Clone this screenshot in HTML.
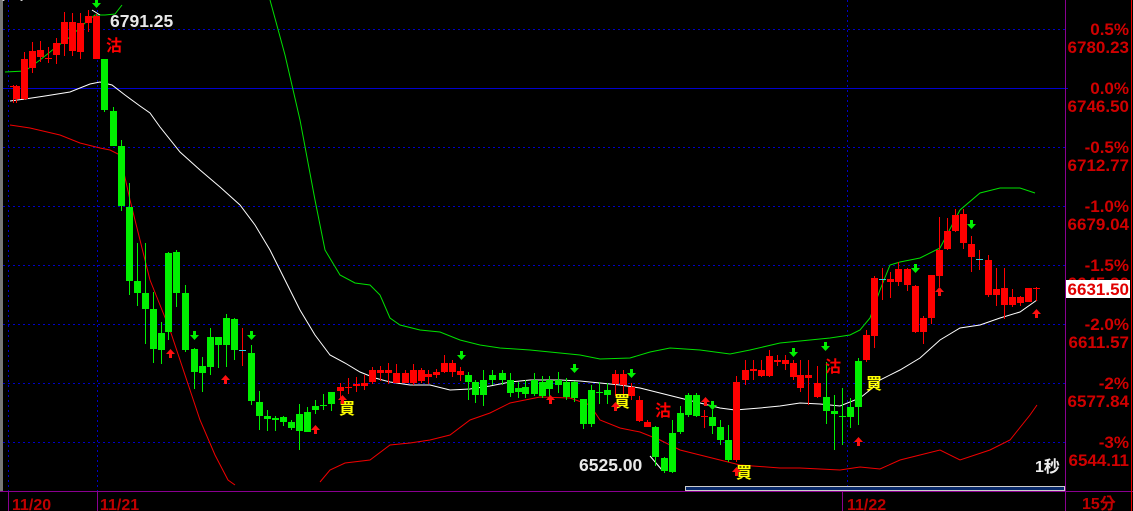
<!DOCTYPE html>
<html><head><meta charset="utf-8"><style>
body{margin:0;background:#000;width:1133px;height:511px;overflow:hidden}
svg{display:block}
text{font-family:"Liberation Sans","Noto Sans CJK TC",sans-serif;font-weight:bold}
</style></head><body>
<svg id="s" width="1133" height="511" xmlns="http://www.w3.org/2000/svg">
<rect width="1133" height="511" fill="#000"/>
<rect x="0" y="0" width="3" height="491" fill="#777"/>
<g stroke="#0000c8" stroke-width="1" stroke-dasharray="2,3">
<line x1="3" y1="29.5" x2="1068" y2="29.5"/>
<line x1="3" y1="147.5" x2="1068" y2="147.5"/>
<line x1="3" y1="206.5" x2="1068" y2="206.5"/>
<line x1="3" y1="265.5" x2="1068" y2="265.5"/>
<line x1="3" y1="324.5" x2="1068" y2="324.5"/>
<line x1="3" y1="383.5" x2="1068" y2="383.5"/>
<line x1="3" y1="442.5" x2="1068" y2="442.5"/>
<line x1="8.5" y1="0" x2="8.5" y2="491"/>
<line x1="97.5" y1="0" x2="97.5" y2="491"/>
<line x1="847.5" y1="0" x2="847.5" y2="491"/>
</g>
<line x1="3" y1="88.5" x2="1068" y2="88.5" stroke="#0000d0"/>
<g id="lines" fill="none" stroke-width="1">
<polyline stroke="#fff" points="10,101 25,99 45,96 70,92 90,84 100,82 112,85 125,95 140,106 150,113 160,127 180,152 200,170 220,187 240,205 255,225 270,250 285,280 300,310 315,335 330,355 345,363 360,372 375,378 390,382 410,385 430,385 450,390 470,389 490,386 510,382 530,380 560,380 580,381 600,383 620,385 640,388 660,393 680,398 700,403 720,408 735,410 760,408 780,406 800,403 820,404 840,406 860,398 870,390 880,380 900,370 920,358 940,340 960,328 980,325 1000,318 1020,312 1037,300"/>
<polyline stroke="#00e000" points="5,72 25,71 40,60 55,48 70,37 85,23 95,15 105,15 115,14 122,5"/>
<polyline stroke="#00e000" points="270,0 285,55 300,120 315,200 325,250 340,275 355,283 370,285 380,295 390,318 400,325 420,330 440,332 460,340 480,345 500,348 530,350 560,353 580,355 600,359 630,358 650,352 670,348 700,350 730,354 750,350 780,343 800,341 830,338 850,335 860,330 870,318 880,290 890,265 900,262 920,258 940,248 960,210 980,193 1000,188 1020,188 1035,193"/>
<polyline stroke="#f00000" points="10,125 30,128 60,135 80,143 100,148 110,150 120,155 130,200 140,240 150,280 160,305 170,330 180,360 190,390 200,420 215,455 228,480 235,485"/>
<polyline stroke="#f00000" points="320,482 330,470 345,463 370,460 390,445 410,443 430,440 450,435 470,420 490,413 510,403 540,397 570,398 590,405 600,420 620,428 640,432 660,440 680,450 700,455 720,460 740,465 780,468 800,468 840,470 860,467 880,469 900,460 920,455 940,450 960,460 990,450 1010,440 1030,415 1037,405"/>
<polyline stroke="#fff" points="92,10 100,15"/>
<polyline stroke="#fff" points="650,456 662,470"/>
</g>
<g id="c"></g>
<text x="110" y="27" fill="#e8e8e8" font-size="17.5">6791.25</text>
<text x="579" y="471" fill="#e8e8e8" font-size="17.5">6525.00</text>
<text x="0" y="-2" fill="#ccc" font-size="14">( 1 )</text>
<g font-size="16" fill="#f00">
<text x="106" y="51">沽</text><text x="655" y="416">沽</text><text x="825" y="372">沽</text>
</g>
<g font-size="16" fill="#ff0">
<text x="339" y="414">買</text><text x="614" y="407">買</text><text x="736" y="478">買</text><text x="866" y="389">買</text>
</g>
<g id="ar"></g>
<rect x="685.5" y="486.5" width="379" height="4" fill="#0a2a6a" stroke="#ccc"/>
<text x="1035" y="472" fill="#eee" font-size="16">1秒</text>
<line x1="0" y1="491.5" x2="1133" y2="491.5" stroke="#8a0090"/>
<line x1="1065.5" y1="0" x2="1065.5" y2="511" stroke="#8a0090"/>
<g stroke="#8a0090"><line x1="8.5" y1="491" x2="8.5" y2="511"/><line x1="97.5" y1="491" x2="97.5" y2="511"/><line x1="842.5" y1="491" x2="842.5" y2="511"/></g>
<line x1="1131.5" y1="0" x2="1131.5" y2="511" stroke="#e00"/>
<g font-size="16" fill="#c00000">
<text x="12" y="510">11/20</text><text x="100" y="510">11/21</text><text x="847" y="510">11/22</text>
<text x="1082" y="509">15分</text>
</g>
<g font-size="17" fill="#d00000" text-anchor="end">
<text x="1129" y="35">0.5%</text><text x="1129" y="53">6780.23</text>
<text x="1129" y="94">0.0%</text><text x="1129" y="112">6746.50</text>
<text x="1129" y="153">-0.5%</text><text x="1129" y="171">6712.77</text>
<text x="1129" y="212">-1.0%</text><text x="1129" y="230">6679.04</text>
<text x="1129" y="271">-1.5%</text><text x="1129" y="289">6645.30</text>
<text x="1129" y="330">-2.0%</text><text x="1129" y="348">6611.57</text>
<text x="1129" y="389">-2%</text><text x="1129" y="407">6577.84</text>
<text x="1129" y="448">-3%</text><text x="1129" y="466">6544.11</text>
</g>
<rect x="1066" y="280" width="64" height="18" fill="#fff"/>
<text x="1129" y="295" font-size="17" fill="#e00000" text-anchor="end">6631.50</text>
</svg>
<script>
var d=[
[13,86,87,85,103,'r'],[16,86,99,85,103,'r'],[24,59,99,52,100,'r'],[32,51,68,42,73,'r'],[40,50,57,41,62,'r'],[48,58,59,47,63,'r'],[56,43,55,38,64,'r'],[64,22,44,12,56,'r'],[72,22,51,13,56,'r'],[80,23,52,13,59,'r'],[88,16,23,10,32,'r'],[96,16,59,14,59,'r'],
[104,59,110,59,112,'g'],[113,111,146,107,146,'g'],[121,146,206,140,211,'g'],[129,207,281,183,295,'g'],[137,281,293,243,306,'g'],[145,293,309,243,344,'g'],[153,309,349,292,363,'g'],[161,333,350,322,364,'g'],[168,253,332,252,340,'g'],[176,252,293,250,307,'g'],[185,293,350,285,352,'g'],[194,349,372,348,389,'g'],[202,366,373,357,392,'g'],[210,337,367,328,375,'g'],[218,337,345,337,368,'g'],[226,318,345,314,367,'g'],[234,319,350,318,360,'g'],[242,350,351,328,366,'c'],[251,353,401,345,405,'g'],[259,402,416,391,430,'g'],[267,416,419,410,431,'g'],[275,418,420,416,431,'g'],[283,417,422,416,426,'g'],[291,422,428,420,430,'g'],[299,414,431,404,450,'g'],[307,412,432,407,432,'g'],[315,406,410,400,414,'g'],[323,405,406,394,410,'g'],[331,392,404,392,411,'g'],
[340,387,391,383,398,'r'],[348,387,388,378,394,'r'],[356,384,386,377,392,'r'],[364,383,386,375,390,'r'],[372,370,382,367,384,'r'],[380,370,373,366,381,'r'],[388,370,373,363,384,'r'],[396,373,383,364,383,'r'],[405,373,383,370,383,'r'],[413,370,383,364,385,'r'],[421,370,381,368,383,'r'],[428,374,377,370,384,'r'],[436,372,375,369,378,'r'],[444,363,372,355,373,'r'],[452,363,372,360,377,'r'],[460,371,375,367,381,'r'],
[468,375,382,372,400,'g'],[475,382,395,380,403,'g'],[483,380,395,370,406,'g'],[492,375,380,370,385,'g'],[502,373,380,370,385,'g'],[510,380,393,373,397,'g'],[518,388,392,382,398,'g'],[525,387,394,380,398,'g'],[534,380,394,373,396,'g'],[542,382,396,376,398,'g'],[549,380,389,376,400,'g'],[558,380,385,372,393,'g'],[566,382,397,378,400,'g'],[574,382,398,381,402,'g'],[583,399,424,399,429,'g'],[591,390,424,385,427,'g'],[599,392,393,382,404,'g'],[607,390,395,383,404,'g'],
[615,374,384,370,396,'r'],[623,374,385,370,398,'r'],[631,387,396,383,400,'r'],[639,400,421,396,422,'r'],[647,422,427,420,427,'r'],
[655,427,457,426,466,'g'],[664,458,471,457,473,'g'],[672,433,472,420,473,'g'],[680,413,432,406,434,'g'],[688,395,415,393,417,'g'],[696,395,416,393,417,'g'],[704,416,417,410,428,'r'],[712,417,426,410,434,'g'],[720,427,440,420,445,'g'],[728,440,460,425,462,'g'],
[736,382,460,376,462,'r'],[745,370,380,360,385,'r'],[753,369,371,360,380,'r'],[761,370,376,360,377,'r'],[769,356,376,350,377,'r'],[777,360,362,355,366,'r'],[785,360,364,355,370,'r'],[793,363,377,360,380,'r'],[800,375,388,360,392,'r'],[808,375,378,360,405,'r'],[817,383,397,366,398,'r'],
[826,397,411,362,424,'g'],[834,411,414,395,450,'g'],[842,416,417,388,445,'g'],[850,407,417,398,428,'g'],[858,361,407,358,425,'g'],
[866,335,360,330,362,'r'],[874,278,336,276,348,'r'],[882,279,280,268,300,'c'],[890,279,282,272,298,'r'],[898,269,282,262,286,'r'],[907,269,285,268,291,'r'],[915,286,332,285,333,'r'],[923,318,332,316,344,'r'],[931,275,318,275,324,'r'],[939,250,276,217,287,'r'],[947,231,249,218,250,'r'],[955,215,231,209,232,'r'],[963,214,243,209,249,'r'],[971,244,257,236,272,'r'],[979,259,260,250,270,'c'],[988,260,295,255,297,'r'],[996,289,295,268,306,'r'],[1004,288,305,268,319,'r'],[1012,297,305,289,307,'r'],[1020,297,303,296,306,'r'],[1028,288,302,288,302,'r'],[1036,288,289,287,301,'r']];
var col={r:'#ff0000',g:'#00f000',c:'#30d0e0'};
var h='';
d.forEach(function(c){var x=c[0],f=col[c[5]],wc=c[5]=='c'?'#ff0000':f;
h+='<rect x="'+x+'" y="'+c[3]+'" width="1" height="'+(c[4]-c[3])+'" fill="'+wc+'"/>';
h+='<rect x="'+(x-3)+'" y="'+c[1]+'" width="7" height="'+Math.max(1,c[2]-c[1])+'" fill="'+f+'"/>';});
document.getElementById('c').innerHTML=h;
var a='';
function dn(x,y){a+='<path d="M'+(x-1)+' '+(y-6)+'h3v4h3l-4.5,5l-4.5,-5h3z" fill="#00f000"/>';}
function up(x,y){a+='<path d="M'+(x-1)+' '+(y+6)+'h3v-4h3l-4.5,-5l-4.5,5h3z" fill="#ff1010"/>';}
dn(96,5);dn(194,337);dn(251,337);dn(461,357);dn(574,370);dn(631,375);dn(712,407);dn(793,354);dn(825,348);dn(915,270);dn(971,226);
up(170,352);up(225,378);up(315,428);up(342,398);up(550,398);up(615,405);up(705,400);up(736,470);up(858,440);up(939,290);up(1036,312);
document.getElementById('ar').innerHTML=a;
</script>
</body></html>
